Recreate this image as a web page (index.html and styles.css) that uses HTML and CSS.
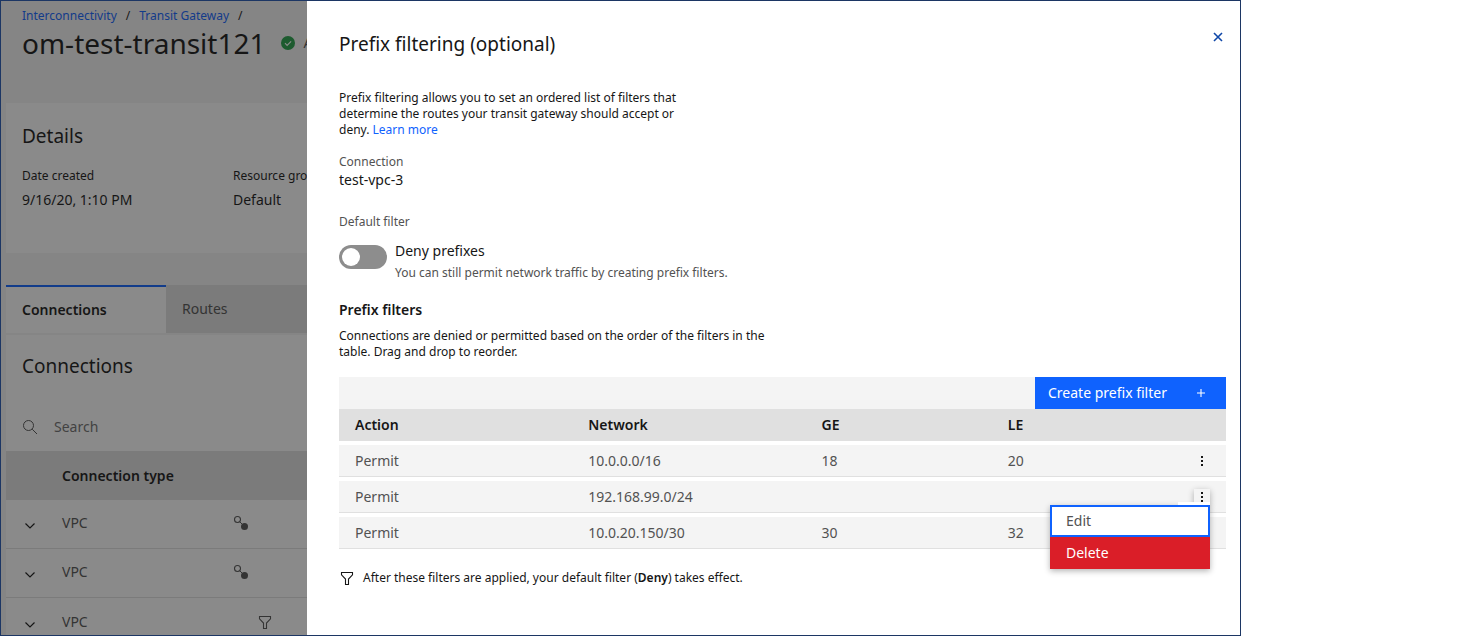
FILE: index.html
```
<!DOCTYPE html>
<html lang="en">
<head>
<meta charset="utf-8">
<title>Prefix filtering</title>
<link rel="stylesheet" href="styles.css">
</head>
<body>
<svg class="sprite" aria-hidden="true">
  <symbol id="chevron" viewBox="0 0 16 16"><path d="M3.500 5.500 8 10l4.500-4.500" fill="none" stroke="currentColor" stroke-width="1.200"/></symbol>
  <symbol id="filter" viewBox="0 0 16 16"><path d="M2.500 2.500h11v2.300L9.500 9v5.500h-3V9l-4-4.200z" fill="none" stroke="currentColor" stroke-width="1.100"/></symbol>
  <symbol id="link" viewBox="0 0 16 16"><circle cx="4.500" cy="4.500" r="3" fill="none" stroke="currentColor" stroke-width="1.100"/><path d="m6.700 6.700 3 3" stroke="currentColor"/><circle cx="11.500" cy="11.500" r="3.500" fill="currentColor"/></symbol>
  <symbol id="dots" viewBox="0 0 16 16"><path d="M7 3h2v2H7zM7 7h2v2H7zM7 11h2v2H7z" fill="currentColor"/></symbol>
</svg>
<div class="shell">
  <main class="page">
    <header class="page-header">
      <nav class="breadcrumb" aria-label="Breadcrumb">
        <a href="#">Interconnectivity</a><span>/</span><a href="#">Transit Gateway</a><span>/</span>
      </nav>
      <div class="title-row">
        <h1>om-test-transit121</h1>
        <span class="status">
          <svg width="16" height="16" viewBox="0 0 16 16" aria-hidden="true"><circle cx="8" cy="8" r="7" fill="#24a148"/><path d="m5 8.200 2.100 2.100 4-4" fill="none" stroke="#fff" stroke-width="1.200"/></svg>
          Active
        </span>
      </div>
    </header>
    <section class="details">
      <h2>Details</h2>
      <dl class="facts">
        <div><dt>Date created</dt><dd>9/16/20, 1:10 PM</dd></div>
        <div><dt>Resource group</dt><dd>Default</dd></div>
      </dl>
    </section>
    <div class="tabs" role="tablist">
      <button class="tab tab-selected" role="tab" aria-selected="true">Connections</button>
      <button class="tab" role="tab" aria-selected="false">Routes</button>
    </div>
    <section class="connections">
      <h2>Connections</h2>
      <label class="search">
        <svg width="16" height="16" viewBox="0 0 16 16" aria-hidden="true"><circle cx="6.500" cy="6.500" r="5" fill="none" stroke="currentColor"/><path d="m10.200 10.200 4.800 4.800" stroke="currentColor"/></svg>
        <input type="search" placeholder="Search" aria-label="Search">
      </label>
      <table class="conn-table">
        <thead><tr><th class="expand"></th><th class="type">Connection type</th><th></th></tr></thead>
        <tbody>
          <tr><td class="expand"><button class="icon-btn" aria-label="Expand row"><svg width="16" height="16"><use href="#chevron"/></svg></button></td><td>VPC</td><td><svg width="16" height="16"><use href="#link"/></svg></td></tr>
          <tr><td class="expand"><button class="icon-btn" aria-label="Expand row"><svg width="16" height="16"><use href="#chevron"/></svg></button></td><td>VPC</td><td><svg width="16" height="16"><use href="#link"/></svg></td></tr>
          <tr class="filtered"><td class="expand"><button class="icon-btn" aria-label="Expand row"><svg width="16" height="16"><use href="#chevron"/></svg></button></td><td>VPC</td><td><svg width="16" height="16"><use href="#filter"/></svg></td></tr>
        </tbody>
      </table>
    </section>
    <div class="scrim"></div>
  </main>

  <aside class="panel" aria-labelledby="panel-title">
    <header class="panel-header">
      <h2 id="panel-title">Prefix filtering (optional)</h2>
      <button class="icon-btn close" aria-label="Close"><svg width="16" height="16" viewBox="0 0 16 16"><path d="m4 4 8 8M12 4l-8 8" fill="none" stroke="currentColor" stroke-width="1.600"/></svg></button>
    </header>
    <p class="intro">Prefix filtering allows you to set an ordered list of filters that determine the routes your transit gateway should accept or deny. <a href="#">Learn more</a></p>
    <dl class="connection"><dt>Connection</dt><dd>test-vpc-3</dd></dl>
    <p class="caption">Default filter</p>
    <div class="default-filter">
      <input class="toggle" type="checkbox" role="switch" id="deny" aria-describedby="deny-help">
      <div>
        <label for="deny">Deny prefixes</label>
        <p class="help" id="deny-help">You can still permit network traffic by creating prefix filters.</p>
      </div>
    </div>
    <h3>Prefix filters</h3>
    <p class="table-intro">Connections are denied or permitted based on the order of the filters in the table. Drag and drop to reorder.</p>
    <div class="toolbar">
      <button class="create">Create prefix filter
        <svg width="16" height="16" viewBox="0 0 16 16" aria-hidden="true"><path d="M8 4v8M4 8h8" stroke="currentColor" stroke-width="1.100"/></svg>
      </button>
    </div>
    <table class="filters">
      <thead><tr><th class="wide">Action</th><th class="wide">Network</th><th class="mid">GE</th><th>LE</th><th></th></tr></thead>
      <tbody>
        <tr><td>Permit</td><td>10.0.0.0/16</td><td>18</td><td>20</td><td class="actions"><button class="icon-btn" aria-label="Options"><svg width="16" height="16"><use href="#dots"/></svg></button></td></tr>
        <tr><td>Permit</td><td>192.168.99.0/24</td><td></td><td></td><td class="actions">
          <div class="overflow">
            <button class="icon-btn open" aria-label="Options" aria-expanded="true"><svg width="16" height="16"><use href="#dots"/></svg></button>
            <div class="menu" role="menu">
              <button class="menu-item focused" role="menuitem">Edit</button>
              <button class="menu-item danger" role="menuitem">Delete</button>
            </div>
          </div>
        </td></tr>
        <tr><td>Permit</td><td>10.0.20.150/30</td><td>30</td><td>32</td><td class="actions"><button class="icon-btn" aria-label="Options"><svg width="16" height="16"><use href="#dots"/></svg></button></td></tr>
      </tbody>
    </table>
    <p class="note"><svg width="16" height="16"><use href="#filter"/></svg><span>After these filters are applied, your default filter (<strong>Deny</strong>) takes effect.</span></p>
  </aside>
</div>
</body>
</html>
```
FILE: styles.css
```
* { box-sizing: border-box; }

body, h1, h2, h3, p, dl, dd { margin: 0; }

body {
  background: #fff;
  color: #161616;
  font: 14px/18px "Noto Sans", sans-serif;
}

a { color: #0f62fe; text-decoration: none; }
button, input { font: inherit; color: inherit; }
svg { display: block; flex: none; }
h2 { font-size: 19px; line-height: 28px; font-weight: 400; }
.sprite { position: absolute; width: 0; height: 0; }

.icon-btn {
  display: inline-block;
  padding: 0;
  border: 0;
  background: none;
  vertical-align: middle;
  cursor: pointer;
}

.shell {
  display: grid;
  grid-template-columns: 306px minmax(0, 1fr);
  height: 100vh;
  margin-right: 239px;
  border: 1px solid #1c3664;
  overflow: hidden;
}

/* Gateway page behind the side panel */
.page {
  position: relative;
  min-height: 0;
  padding-left: 5px;
  overflow: hidden;
  background: #f4f4f4;
  white-space: nowrap;
}
.scrim { position: absolute; inset: 0; background: rgba(22, 22, 22, 0.5); }

.page-header { height: 102px; padding: 7px 0 0 16px; }
.breadcrumb { display: flex; gap: 9px; font-size: 12px; line-height: 16px; }
.title-row { display: flex; align-items: center; gap: 14px; margin-top: 1px; }
h1 { font-size: 28px; line-height: 36px; font-weight: 400; }
.status { display: flex; align-items: center; gap: 8px; color: #525252; }

.details { height: 150px; padding: 19px 16px; background: #fff; }
.facts { display: grid; grid-template-columns: 195px 195px; column-gap: 16px; margin-top: 18px; }
.facts dt { font-size: 12px; line-height: 16px; }
.facts dd { margin-top: 7px; }

.tabs { display: flex; margin-top: 32px; }
.tab {
  flex: none;
  width: 160px;
  height: 48px;
  padding: 0 16px;
  border: 0;
  background: #e0e0e0;
  color: #525252;
  text-align: left;
}
.tab-selected { background: #fff; border-top: 2px solid #0f62fe; color: #161616; font-weight: 600; }

.connections { margin-top: 2px; padding-top: 17px; background: #fff; }
.connections h2 { padding-left: 16px; }
.search { display: flex; align-items: center; gap: 16px; height: 48px; margin-top: 23px; padding-left: 16px; color: #525252; }
.search input { min-width: 0; padding: 0; border: 0; background: none; outline: 0; }
.search input::placeholder { color: #6f6f6f; opacity: 1; }

.conn-table { width: 100%; border-collapse: separate; border-spacing: 0; table-layout: fixed; }
.conn-table th { height: 49px; padding: 0; background: #e0e0e0; text-align: left; font-weight: 600; }
.conn-table td { height: 49px; padding: 0 0 3px; border-bottom: 1px solid #e0e0e0; color: #525252; }
.conn-table .expand { width: 56px; padding-left: 16px; }
.conn-table td.expand { padding: 1px 0 0 16px; color: #161616; }
.conn-table .type { width: 171px; }
.conn-table .filtered td { height: 52px; }
.conn-table .filtered svg { margin-left: 24px; }
.conn-table .filtered .expand svg { margin-left: 0; }

/* Side panel */
.panel { min-height: 0; padding: 28px 14px 16px 32px; background: #fff; }
.panel-header { display: flex; justify-content: space-between; align-items: flex-start; }
.panel-header h2 { padding-top: 1px; }
.close { color: #0f47a8; }
.intro { max-width: 360px; margin-top: 32px; font-size: 12px; line-height: 16px; }
.connection { margin-top: 16px; }
.connection dt, .caption, .help { color: #525252; font-size: 12px; line-height: 16px; }
.connection dd { margin-top: 1px; }
.caption { margin-top: 25px; }

.default-filter { display: flex; gap: 8px; margin-top: 12px; }
.default-filter label { display: block; }
.help { margin-top: 5px; }
.toggle {
  appearance: none;
  display: flex;
  align-items: center;
  flex: none;
  width: 48px;
  height: 24px;
  margin: 3px 0 0;
  padding: 0 3px;
  border-radius: 12px;
  background: #8d8d8d;
}
.toggle::before { content: ""; width: 18px; height: 18px; border-radius: 50%; background: #fff; }

h3 { margin-top: 20px; font-size: 14px; line-height: 18px; font-weight: 600; }
.table-intro { max-width: 440px; margin-top: 9px; font-size: 12px; line-height: 16px; }

.toolbar { display: flex; justify-content: flex-end; margin-top: 17px; background: #f4f4f4; }
.create {
  display: flex;
  align-items: center;
  justify-content: space-between;
  min-width: 191px;
  height: 32px;
  padding: 0 17px 0 13px;
  border: 0;
  background: #0f62fe;
  color: #fff;
}

.filters { width: 100%; border-collapse: separate; border-spacing: 0; table-layout: fixed; text-align: left; }
.filters th { height: 32px; padding: 0 16px; background: #e0e0e0; font-weight: 600; }
.filters td {
  height: 36px;
  padding: 0 16px;
  border-top: 4px solid #fff;
  border-bottom: 1px solid #e0e0e0;
  background: #f4f4f4;
  color: #525252;
}
.filters .wide { width: 26.3%; }
.filters .mid { width: 21%; }
.filters .actions { text-align: right; line-height: 16px; color: #161616; }
.overflow { position: relative; }
.open { background: #f4f4f4; box-shadow: 0 2px 6px rgba(0, 0, 0, 0.3); }
.menu {
  position: absolute;
  z-index: 1;
  top: 100%;
  right: 0;
  width: 160px;
  line-height: 18px;
  box-shadow: 0 2px 6px rgba(0, 0, 0, 0.3);
}
.menu::before { content: ""; position: absolute; right: 0; bottom: 100%; width: 32px; height: 3px; background: #fff; }
.menu-item { display: block; width: 100%; height: 32px; padding: 0 16px; border: 0; text-align: left; }
.focused { padding: 0 14px; border: 2px solid #0f62fe; background: #fff; color: #525252; }
.danger { background: #da1e28; color: #fff; }

.note { display: flex; align-items: center; gap: 8px; margin-top: 21px; font-size: 12px; line-height: 16px; }
.note strong { font-weight: 600; }
```
